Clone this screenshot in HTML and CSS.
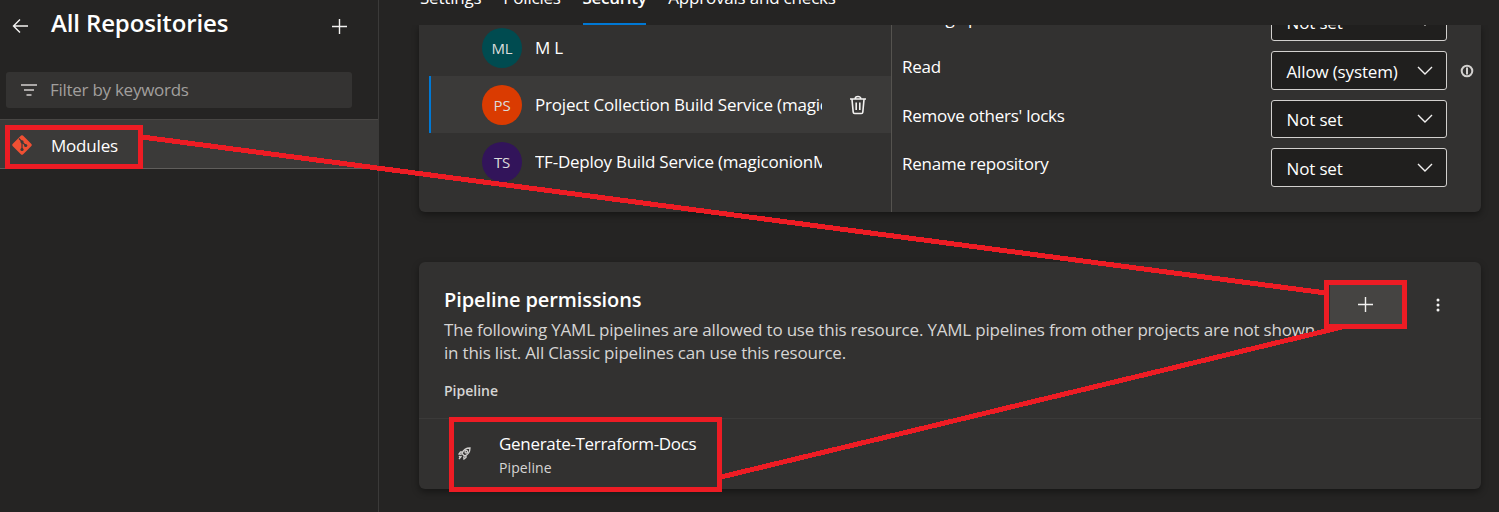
FILE: index.html
```
<!DOCTYPE html>
<html lang="en">
<head>
<meta charset="utf-8">
<title>All Repositories - Security</title>
<link rel="stylesheet" href="styles.css">
</head>
<body>
<div class="app">
  <aside class="sidebar">
    <header class="side-head">
      <svg class="back" width="18" height="16" viewBox="0 0 18 16"><path d="M16 8H1.500M8 1.500 1.500 8l6.500 6.500"/></svg>
      <h1>All Repositories</h1>
      <svg class="add" width="15" height="15" viewBox="0 0 15 15"><path d="M7.500 0v15M0 7.500h15"/></svg>
    </header>
    <div class="filter">
      <svg width="16" height="12" viewBox="0 0 16 12"><path d="M0 1h16M3 6h10M5.500 11h5"/></svg>
      <span>Filter by keywords</span>
    </div>
    <div class="repo">
      <svg class="git" width="22" height="22" viewBox="0 0 22 22"><rect x="3.700" y="3.700" width="14.600" height="14.600" rx="1.300" transform="rotate(45 11 11)" fill="#f05033"/><path d="M8 4.500l3 3.200v8M11 8l4 3.800" stroke="#3b3a39" stroke-width="1.200"/><circle cx="11" cy="7.800" r="1.600" fill="#3b3a39"/><circle cx="11" cy="15.500" r="1.600" fill="#3b3a39"/><circle cx="14.700" cy="11.500" r="1.600" fill="#3b3a39"/></svg>
      <span>Modules</span>
    </div>
  </aside>
  <main class="main">
    <nav class="tabs">
      <span class="tab">Settings</span>
      <span class="tab">Policies</span>
      <span class="tab active">Security</span>
      <span class="tab">Approvals and checks</span>
    </nav>
    <section class="card security">
      <div class="users">
        <div class="user"><span class="avatar teal">ML</span><span class="name">M L</span></div>
        <div class="user selected"><span class="avatar orange">PS</span><span class="name">Project Collection Build Service (magiconion)</span>
          <svg class="trash" width="18" height="20" viewBox="0 0 18 20"><path d="M1 4h16M6.200 3.800c0-3 5.600-3 5.600 0M3 4.500l1.200 12.700q.1 1.300 1.500 1.300h6.600q1.400 0 1.500-1.300L15 4.500M7.200 7.500v7.500M10.800 7.500v7.500"/></svg></div>
        <div class="user"><span class="avatar purple">TS</span><span class="name">TF-Deploy Build Service (magiconionM)</span></div>
      </div>
      <div class="perms">
        <div class="perm"><span class="label">Manage permissions</span><span class="select"><span>Not set</span><svg width="16" height="9" viewBox="0 0 16 9"><path d="M1 1l7 7 7-7"/></svg></span></div>
        <div class="perm"><span class="label">Read</span><span class="select"><span>Allow (system)</span><svg width="16" height="9" viewBox="0 0 16 9"><path d="M1 1l7 7 7-7"/></svg></span>
          <svg class="info" width="14" height="14" viewBox="0 0 14 14"><circle cx="7" cy="7" r="5.300"/><path d="M7 3.500v7"/></svg></div>
        <div class="perm"><span class="label">Remove others' locks</span><span class="select"><span>Not set</span><svg width="16" height="9" viewBox="0 0 16 9"><path d="M1 1l7 7 7-7"/></svg></span></div>
        <div class="perm"><span class="label">Rename repository</span><span class="select"><span>Not set</span><svg width="16" height="9" viewBox="0 0 16 9"><path d="M1 1l7 7 7-7"/></svg></span></div>
      </div>
    </section>
    <section class="card pipelines">
      <div class="pipe-head">
        <div class="pipe-copy">
          <h2>Pipeline permissions</h2>
          <p>The following YAML pipelines are allowed to use this resource. YAML pipelines from other projects are not shown<br>in this list. All Classic pipelines can use this resource.</p>
        </div>
        <span class="add-btn"><svg width="15" height="15" viewBox="0 0 15 15"><path d="M7.500 0v15M0 7.500h15"/></svg></span>
        <svg class="more" width="4" height="14" viewBox="0 0 4 14"><circle cx="2" cy="2" r="1.500"/><circle cx="2" cy="7" r="1.500"/><circle cx="2" cy="12" r="1.500"/></svg>
      </div>
      <div class="col-head">Pipeline</div>
      <div class="pipe-row">
        <svg class="rocket" width="13" height="13" viewBox="0 0 13 13"><path d="M4 6.500C5.500 2.500 8.500 1 12 1c0 3.500-1.500 6.500-5.500 8zM4.500 5H2.500L1 7l2.500.3M8 8.500v2L6 12l-.3-2.500M3.500 9 1 12M2 9l-1 1"/><circle cx="8.300" cy="4.700" r="1.300"/></svg>
        <div class="pipe-name"><span class="tight">Generate-Terraform-Docs</span><span class="kind">Pipeline</span></div>
      </div>
    </section>
  </main>
</div>
<svg class="marks" width="1499" height="512" viewBox="0 0 1499 512" shape-rendering="crispEdges">
  <rect x="7.500" y="127.500" width="133" height="39"/>
  <rect x="1326.500" y="282.500" width="78" height="44"/>
  <rect x="451.500" y="419.500" width="268" height="70"/>
  <path d="M142 137 1326 293M721 477 1342 327"/>
</svg>
</body>
</html>
```
FILE: styles.css
```
* { box-sizing: border-box; }
body { margin: 0; background: #252423; color: #fff; font: 17px/24px "Open Sans", "Noto Sans", sans-serif; letter-spacing: -0.2px; overflow: hidden; white-space: nowrap; }
h1, h2, p { margin: 0; }
svg { flex: none; fill: none; stroke: #f3f2f1; stroke-width: 1.4; }
.app { display: flex; width: 1499px; height: 512px; }

.sidebar { width: 379px; flex: none; border-right: 1px solid #3b3a39; }
.side-head { display: flex; align-items: center; height: 72px; padding: 0 31px 20px 12px; }
.side-head h1 { margin-left: 21px; flex: 1; font-size: 24px; font-weight: 600; line-height: 32px; padding-bottom: 6px; letter-spacing: -0.13px; }
.filter { display: flex; align-items: center; height: 36px; width: 346px; margin-left: 6px; padding-left: 15px; gap: 13px; background: #343332; border-radius: 3px; color: #a19f9d; letter-spacing: -0.27px; }
.filter svg { stroke: #d2d0ce; }
.repo { display: flex; align-items: center; height: 50px; margin-top: 11px; padding-left: 11px; gap: 18px; background: #3b3a39; border-top: 1px solid #484644; border-bottom: 1px solid #605e5c; }
.repo > span { padding-top: 3px; }
.repo .git { stroke: none; margin-top: 2px; }

.main { flex: 1; padding: 0 18px 0 40px; overflow: hidden; }
.tabs { display: flex; align-items: flex-end; height: 25px; padding-left: 1px; }
.tab { height: 39px; margin-right: 21.800px; flex: none; }
.tab.active { font-weight: 600; border-bottom: 2px solid #0078d4; letter-spacing: -0.3px; }

.card { background: #323130; box-shadow: 0 3px 7px rgba(0, 0, 0, .4); }
.security { display: flex; height: 187px; border-radius: 0 0 6px 6px; clip-path: inset(0 -12px -12px -12px); }
.users { width: 473px; flex: none; border-right: 1px solid #55534f; margin-top: -6px; padding-left: 10px; }
.user { display: flex; align-items: center; height: 57px; padding-left: 53px; }
.user.selected { background: #3b3a39; border-left: 2px solid #0078d4; padding-left: 51px; }
.avatar { width: 40px; height: 40px; border-radius: 50%; flex: none; line-height: 41px; text-align: center; font-size: 15px; color: #dcdcdc; }
.teal { background: #004b50; }
.orange { background: #da3b01; }
.purple { background: #32145a; }
.name { width: 287px; margin-left: 13px; padding-top: 1px; overflow: hidden; flex: none; letter-spacing: -0.18px; }
.user:last-child .name { letter-spacing: -0.24px; }
.tight { letter-spacing: -0.31px; }
.trash { margin-left: 27px; stroke-width: 1.6; }
.perms { flex: 1; overflow: hidden; padding-left: 10px; letter-spacing: -0.25px; }
.perm { display: flex; height: 48.600px; align-items: flex-start; }
.perm:first-child { margin-top: -22.600px; }
.label { width: 369px; padding-top: 4px; flex: none; }
.select { display: flex; align-items: center; justify-content: space-between; width: 176px; height: 38.500px; padding: 3px 13px 0 14.500px; background: #201f1e; border: 1px solid #d2d0ce; border-radius: 3px; flex: none; letter-spacing: -0.15px; }
.select svg { margin-top: -3px; }
.info { margin: 13px 0 0 12.500px; stroke: #d2d0ce; stroke-width: 2; }

.pipelines { height: 227px; margin-top: 50px; border-radius: 6px; }
.pipe-head { display: flex; height: 117px; padding: 22px 0 0 25px; }
.pipe-copy { width: 885px; color: #d6d5d4; }
.pipe-copy h2 { font-size: 20px; line-height: 32px; font-weight: 600; color: #fff; letter-spacing: -0.1px; }
.pipe-copy p { line-height: 23px; padding-top: 2px; }
.add-btn { display: flex; align-items: center; justify-content: center; width: 74px; height: 41px; background: #454442; margin-left: 1px; }
.add-btn svg { margin: -1px 0 0 -3px; }
.more { margin: 14px 0 0 31.500px; fill: #f3f2f1; stroke: none; }
.col-head { height: 40px; padding-left: 25px; border-bottom: 1px solid #3b3a39; font-size: 14px; font-weight: 600; letter-spacing: 0; color: #d6d5d4; }
.pipe-row { display: flex; padding: 13px 0 0 39px; }
.rocket { margin-top: 15px; stroke: #d2d0ce; stroke-width: 1.3; }
.pipe-name { display: flex; flex-direction: column; margin-left: 28px; }
.kind { font-size: 14px; letter-spacing: 0.1px; color: #d6d5d4; }

/* Red callout boxes and connectors drawn over the page */
.marks { position: absolute; left: 0; top: 0; stroke: #ed1c24; stroke-width: 5; pointer-events: none; }
```
